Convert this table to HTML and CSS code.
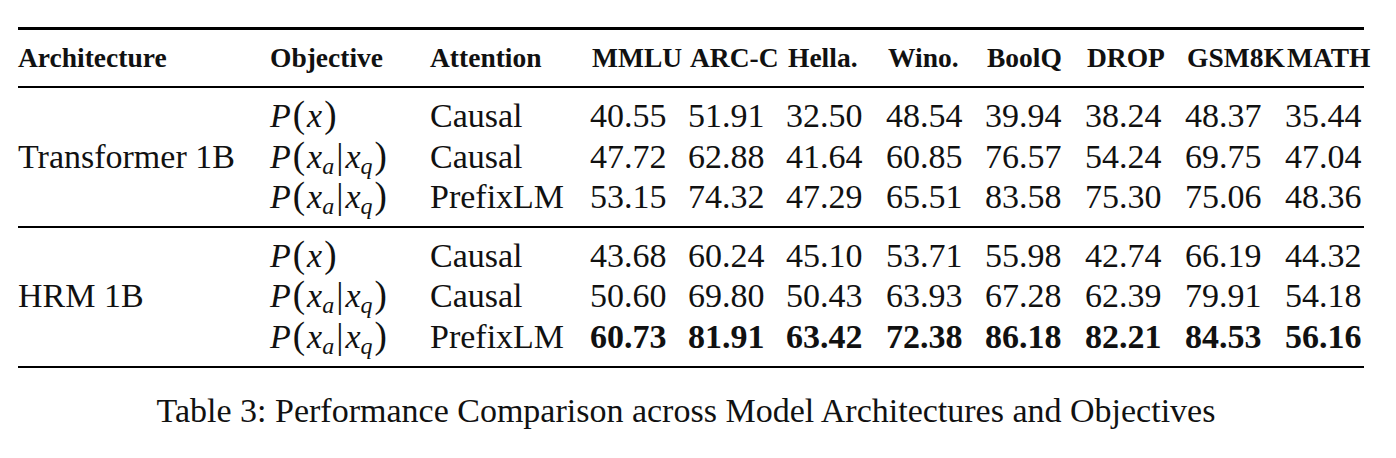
FILE: index.html
```html
<!DOCTYPE html>
<html lang="en">
<head>
<meta charset="utf-8">
<title>Table 3</title>
<link rel="stylesheet" href="styles.css">
</head>
<body>
<div class="page">
  <div class="results">
    <div class="rule rule-heavy rule-top"></div>

    <div class="th">Architecture</div>
    <div class="th">Objective</div>
    <div class="th">Attention</div>
    <div class="th num">MMLU</div>
    <div class="th num">ARC-C</div>
    <div class="th num">Hella.</div>
    <div class="th num">Wino.</div>
    <div class="th num">BoolQ</div>
    <div class="th num">DROP</div>
    <div class="th num">GSM8K</div>
    <div class="th num">MATH</div>

    <div class="rule rule-light"></div>

    <div class="td arch">Transformer 1B</div>
    <div class="td"><span class="math"><i>P</i><span class="paren">(</span><i>x</i><span class="paren">)</span></span></div>
    <div class="td">Causal</div>
    <div class="td">40.55</div><div class="td">51.91</div><div class="td">32.50</div><div class="td">48.54</div><div class="td">39.94</div><div class="td">38.24</div><div class="td">48.37</div><div class="td">35.44</div>

    <div class="td"><span class="math"><i>P</i><span class="paren">(</span><i>x</i><span class="sub">a</span><span class="bar">|</span><i>x</i><span class="sub">q</span><span class="paren">)</span></span></div>
    <div class="td">Causal</div>
    <div class="td">47.72</div><div class="td">62.88</div><div class="td">41.64</div><div class="td">60.85</div><div class="td">76.57</div><div class="td">54.24</div><div class="td">69.75</div><div class="td">47.04</div>

    <div class="td"><span class="math"><i>P</i><span class="paren">(</span><i>x</i><span class="sub">a</span><span class="bar">|</span><i>x</i><span class="sub">q</span><span class="paren">)</span></span></div>
    <div class="td">PrefixLM</div>
    <div class="td">53.15</div><div class="td">74.32</div><div class="td">47.29</div><div class="td">65.51</div><div class="td">83.58</div><div class="td">75.30</div><div class="td">75.06</div><div class="td">48.36</div>

    <div class="rule rule-light"></div>

    <div class="td arch">HRM 1B</div>
    <div class="td"><span class="math"><i>P</i><span class="paren">(</span><i>x</i><span class="paren">)</span></span></div>
    <div class="td">Causal</div>
    <div class="td">43.68</div><div class="td">60.24</div><div class="td">45.10</div><div class="td">53.71</div><div class="td">55.98</div><div class="td">42.74</div><div class="td">66.19</div><div class="td">44.32</div>

    <div class="td"><span class="math"><i>P</i><span class="paren">(</span><i>x</i><span class="sub">a</span><span class="bar">|</span><i>x</i><span class="sub">q</span><span class="paren">)</span></span></div>
    <div class="td">Causal</div>
    <div class="td">50.60</div><div class="td">69.80</div><div class="td">50.43</div><div class="td">63.93</div><div class="td">67.28</div><div class="td">62.39</div><div class="td">79.91</div><div class="td">54.18</div>

    <div class="td"><span class="math"><i>P</i><span class="paren">(</span><i>x</i><span class="sub">a</span><span class="bar">|</span><i>x</i><span class="sub">q</span><span class="paren">)</span></span></div>
    <div class="td">PrefixLM</div>
    <div class="td best">60.73</div><div class="td best">81.91</div><div class="td best">63.42</div><div class="td best">72.38</div><div class="td best">86.18</div><div class="td best">82.21</div><div class="td best">84.53</div><div class="td best">56.16</div>

    <div class="rule rule-heavy rule-bottom"></div>
  </div>
  <p class="caption">Table 3: Performance Comparison across Model Architectures and Objectives</p>
</div>
</body>
</html>
```

FILE: styles.css
```css
html, body {
  margin: 0;
  padding: 0;
  background: #ffffff;
}

body {
  font-family: "Liberation Serif", "Times New Roman", serif;
  color: #111111;
}

.page {
  padding: 27px 0 0 18px;
  width: 1346px;
}

.results {
  display: grid;
  grid-template-columns: 252px 160px 160px 98px 98px 100px 99px 100px 100px 100px 79px;
  width: 1346px;
}

.rule {
  grid-column: 1 / -1;
  background: #000000;
}

.rule-heavy {
  height: 2.6px;
}

.rule-light {
  height: 1.6px;
  margin: 8.5px 0 8px;
}

.rule-top {
  margin: 0 0 8.4px;
}

.rule-bottom {
  margin: 8.5px 0 0;
}

.th {
  font-weight: bold;
  font-size: 27.5px;
  line-height: 40px;
  white-space: nowrap;
}

.th.num {
  padding-left: 2px;
}

.td {
  font-size: 34px;
  line-height: 40.5px;
  white-space: nowrap;
}

.arch {
  grid-row: span 3;
  align-self: center;
}

.best {
  font-weight: bold;
}

.math {
  font-size: 34px;
}

.math i {
  font-style: italic;
}

.paren {
  font-size: 37px;
  line-height: 0;
  margin: 0 2px;
}

.bar {
  font-size: 36px;
  line-height: 0;
  margin: 0 2px;
}

.sub {
  font-style: italic;
  font-size: 24px;
  line-height: 0;
  vertical-align: -6px;
}

.caption {
  margin: 23px 0 0;
  font-size: 34px;
  line-height: 40px;
  text-align: center;
  padding-right: 10px;
}
```
